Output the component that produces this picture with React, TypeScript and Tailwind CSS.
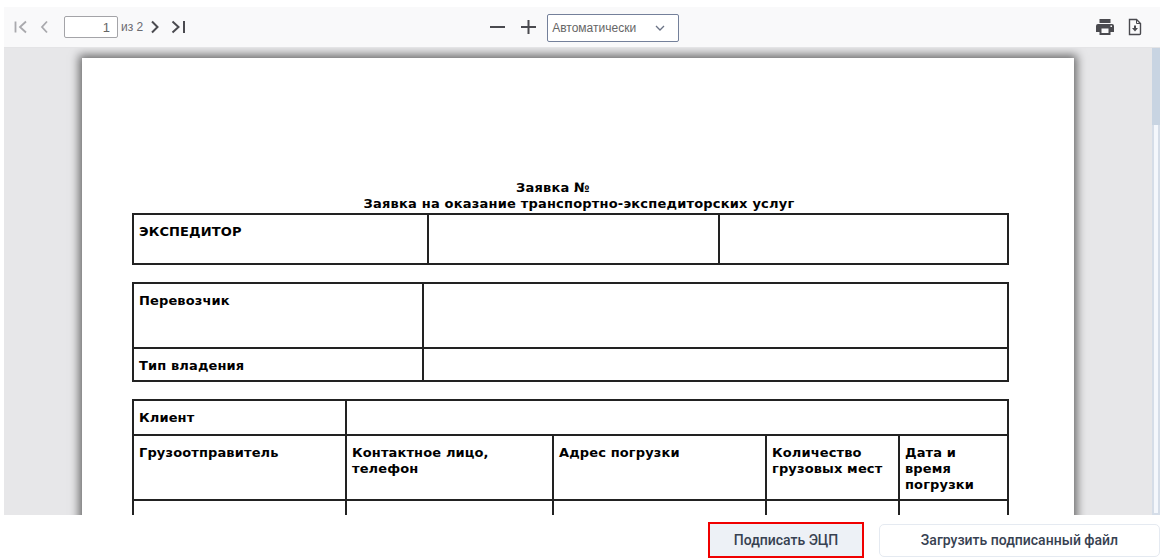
import React from "react";

const Ic = ({ children, w = 20, h = 20, className = "" }: { children: React.ReactNode; w?: number; h?: number; className?: string }) => (
  <svg width={w} height={h} viewBox={`0 0 ${w} ${h}`} fill="none" className={className}>{children}</svg>
);

const td = "border-2 border-[#222] align-top px-[5px] pt-[9px] font-bold text-[13px] leading-[16px] tracking-[0.13px] text-black";

export default function App() {
  return (
    <div className="w-[1166px] h-[558px] bg-white overflow-hidden font-['Liberation_Sans',sans-serif]">
      <div className="h-[515px] pt-[7px] pl-[4px] pr-[6px] flex flex-col">
        <div className="h-[41px] shrink-0 bg-[#f9f9fa] border-b border-[#e4e4e6] flex items-center text-[#5a5a5e]">
          <div className="w-[10px]" />
          <Ic w={14} h={14} className="text-[#a9a9ad]"><path d="M1.5 1.5v11M12 1.5 6 7l6 5.5" stroke="currentColor" strokeWidth="1.8" /></Ic>
          <Ic w={14} h={14} className="ml-[10px] text-[#a9a9ad]"><path d="M9 1.5 4 7l5 5.5" stroke="currentColor" strokeWidth="1.8" /></Ic>
          <input readOnly value="1" className="ml-[12px] w-[54px] h-[22px] border border-[#a4a4a8] rounded-[2px] bg-white text-right pr-[7px] text-[13px] text-[#666]" />
          <span className="ml-[3px] text-[12px] text-[#6a6a70]">из 2</span>
          <Ic w={14} h={14} className="ml-[5px] text-[#4a4a4f]"><path d="M4 1.5 9.5 7 4 12.5" stroke="currentColor" strokeWidth="2" /></Ic>
          <Ic w={16} h={14} className="ml-[9px] text-[#4a4a4f]"><path d="M1.5 1.5 7.5 7l-6 5.5" stroke="currentColor" strokeWidth="2" /><path d="M13 1v12" stroke="currentColor" strokeWidth="2" /></Ic>
          <div className="w-[303px]" />
          <Ic w={16} h={16} className="text-[#4a4a4f]"><path d="M0 8h15" stroke="currentColor" strokeWidth="2" /></Ic>
          <Ic w={16} h={16} className="ml-[15px] text-[#4a4a4f]"><path d="M0 8h15M7.5 1v14" stroke="currentColor" strokeWidth="2" /></Ic>
          <div className="ml-[10px] mt-[1px] w-[132px] h-[28px] border border-[#74809a] rounded-[2px] bg-white flex items-center justify-between pl-[4px] pr-[13px] text-[12px] text-[#666]">
            <span>Автоматически</span>
            <Ic w={10} h={6} className="text-[#6a7285]"><path d="M1 1l4 4 4-4" stroke="currentColor" strokeWidth="1.3" /></Ic>
          </div>
          <div className="flex-1" />
          <Ic w={20} h={18} className="text-[#4a4a4f]"><path fill="currentColor" d="M4.5 1h11v4h-11zM3 6h14a2 2 0 0 1 2 2v6h-3.5v3h-11v-3H1V8a2 2 0 0 1 2-2z" /><path fill="#f9f9fa" d="M6.5 10.5h7V15h-7zM15.5 7.5h1.5V9h-1.5z" /></Ic>
          <Ic w={14} h={18} className="ml-[13px] mr-[18px] text-[#4a4a4f]"><path d="M1.5 1.5h7l4 4v10a1 1 0 0 1-1 1h-10z" stroke="currentColor" strokeWidth="1.4" /><path d="M8.5 1.5v4h4" stroke="currentColor" strokeWidth="1" /><path fill="currentColor" d="M6 7.5h2V10h2l-3 3.5L4 10h2z" /></Ic>
        </div>
        <div className="flex-1 min-h-0 flex bg-[#e7e7e9]">
          <div className="flex-1 min-w-0 overflow-hidden pt-[10px] pl-[78px]">
            <div className="w-[992px] h-[1400px] bg-white shadow-[0_0_9px_3px_rgba(0,0,0,0.55)] pt-[122px] pl-[50px] font-['DejaVu_Sans',sans-serif]">
              <div className="w-[876px] text-center font-bold text-[13px] leading-[16px] tracking-[0.2px] text-black">
                <div className="pr-[34px]">Заявка №</div>
                <div className="pl-[18px]">Заявка на оказание транспортно-экспедиторских услуг</div>
              </div>
              <table className="w-[877px] table-fixed border-collapse mt-[1px]">
                <colgroup><col className="w-[295px]" /><col className="w-[291px]" /><col /></colgroup>
                <tbody><tr className="h-[50px]"><td className={td}>ЭКСПЕДИТОР</td><td className={td} /><td className={td} /></tr></tbody>
              </table>
              <table className="w-[877px] table-fixed border-collapse mt-[17px]">
                <colgroup><col className="w-[290px]" /><col /></colgroup>
                <tbody>
                  <tr className="h-[65px]"><td className={td}>Перевозчик</td><td className={td} /></tr>
                  <tr className="h-[33px]"><td className={td}>Тип владения</td><td className={td} /></tr>
                </tbody>
              </table>
              <table className="w-[877px] table-fixed border-collapse mt-[17px]">
                <colgroup><col className="w-[213px]" /><col className="w-[207px]" /><col className="w-[213px]" /><col className="w-[133px]" /><col /></colgroup>
                <tbody>
                  <tr className="h-[35px]"><td className={td}>Клиент</td><td className={td} colSpan={4} /></tr>
                  <tr className="h-[65px]">
                    <td className={td}>Грузоотправитель</td>
                    <td className={td}>Контактное лицо, телефон</td>
                    <td className={td}>Адрес погрузки</td>
                    <td className={td}>Количество грузовых мест</td>
                    <td className={td}>Дата и время погрузки</td>
                  </tr>
                  <tr className="h-[60px]"><td className={td} /><td className={td} /><td className={td} /><td className={td} /><td className={td} /></tr>
                </tbody>
              </table>
            </div>
          </div>
          <div className="w-[8px] shrink-0 flex flex-col">
            <div className="h-[77px] shrink-0 bg-[#c8d4e2]" />
            <div className="flex-1 border-x-2 border-b-2 border-[#d5dde8] bg-[#f4f7fc]" />
          </div>
        </div>
      </div>
      <div className="flex justify-end items-center gap-[15px] pr-[6px] pt-[7px] h-[43px] font-['Roboto',sans-serif] font-medium text-[14px] text-[#374151]">
        <button className="w-[156px] h-[36px] bg-[#edf1f6] border-2 border-[#f00000]">Подписать ЭЦП</button>
        <button className="w-[281px] h-[33px] bg-white border border-[#e5eaf1] rounded-[5px]">Загрузить подписанный файл</button>
      </div>
    </div>
  );
}
